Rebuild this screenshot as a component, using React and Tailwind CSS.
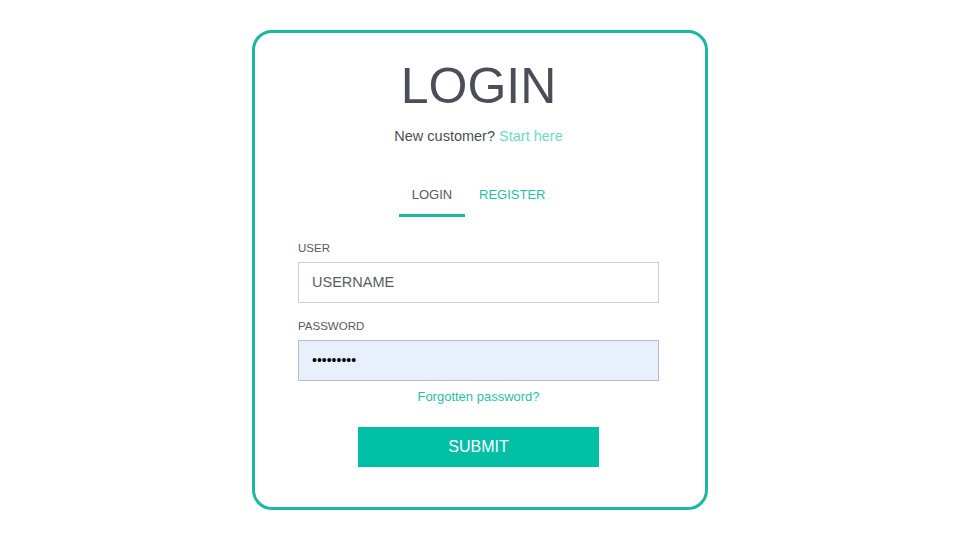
export default function App() {
  return (
    <div className="w-[960px] h-[540px] bg-white flex justify-center pt-[30px]" style={{ fontFamily: '"Liberation Sans", Arial, sans-serif' }}>
      <div className="w-[456px] h-[480px] border-[3px] border-[#1ab8a0] rounded-[20px] pl-[43px] pr-[46px] pt-[24px] flex flex-col">
        <h1 className="text-[50px] leading-[58px] text-center text-[#4a4f57]">LOGIN</h1>
        <p className="mt-[12px] text-center text-[14.5px] leading-[18px] text-[#4a4f57]">
          New customer? <span className="text-[#6ed9c2]">Start here</span>
        </p>
        <div className="mt-[42px] flex pl-[101px] gap-[14px]">
          <div className="w-[66px] flex flex-col items-center">
            <span className="text-[13px] leading-[16px] text-[#555a60]">LOGIN</span>
            <div className="mt-[11px] h-[3px] w-full bg-[#1ab8a0]" />
          </div>
          <div className="flex flex-col items-start">
            <span className="text-[13px] leading-[16px] text-[#2bbfa3]">REGISTER</span>
          </div>
        </div>
        <label className="mt-[24px] text-[11.5px] leading-[14px] text-[#555a60]">USER</label>
        <div className="mt-[7px] h-[41px] border border-[#cfcfcf] flex items-center pl-[13px] text-[14.5px] text-[#5a5d62]">USERNAME</div>
        <label className="mt-[16px] text-[11.5px] leading-[14px] text-[#555a60]">PASSWORD</label>
        <div className="mt-[7px] h-[41px] border border-[#b8bcc4] bg-[#e8f0fe] flex items-center pl-[13px] text-[14px] text-black">•••••••••</div>
        <p className="mt-[8px] text-center text-[13px] leading-[16px] text-[#2bbfa3]">Forgotten password?</p>
        <div className="mt-[22px] flex justify-center">
          <button className="w-[241px] h-[40px] bg-[#00bfa5] text-white text-[16px]">SUBMIT</button>
        </div>
      </div>
    </div>
  );
}
